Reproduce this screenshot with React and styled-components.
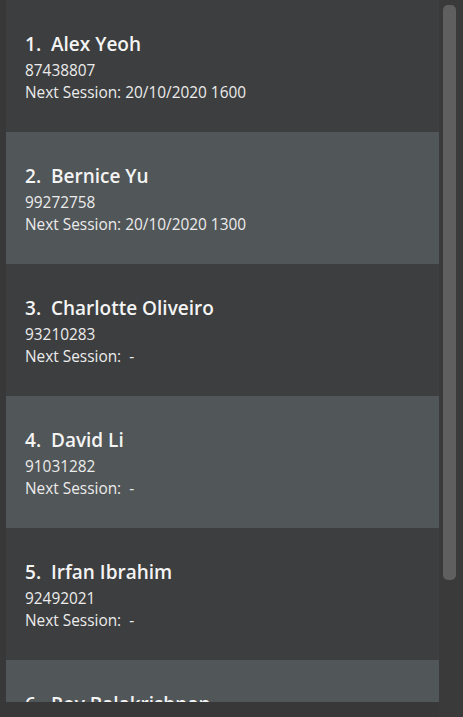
import React from 'react';
import styled, { createGlobalStyle } from 'styled-components';

const people = [
  { name: 'Alex Yeoh', phone: '87438807', session: '20/10/2020 1600' },
  { name: 'Bernice Yu', phone: '99272758', session: '20/10/2020 1300' },
  { name: 'Charlotte Oliveiro', phone: '93210283', session: ' -' },
  { name: 'David Li', phone: '91031282', session: ' -' },
  { name: 'Irfan Ibrahim', phone: '92492021', session: ' -' },
  { name: 'Roy Balakrishnan', phone: '92624417', session: ' -' },
];

const GlobalStyle = createGlobalStyle`
  html, body {
    margin: 0;
    padding: 0;
    background: #383838;
    overflow: hidden;
  }
`;

const App = () => {
  return (
    <>
      <GlobalStyle />
      <Window>
        <ListArea>
          <List>
            {people.map((p, i) => (
              <Cell key={p.name} odd={i % 2 === 1}>
                <Name>
                  {i + 1}.&nbsp;&nbsp;{p.name}
                </Name>
                <Detail>{p.phone}</Detail>
                <Detail>Next Session: {p.session}</Detail>
              </Cell>
            ))}
          </List>
        </ListArea>
        <Track>
          <Thumb />
        </Track>
      </Window>
    </>
  );
};

const Window = styled.div`
  width: 463px;
  height: 717px;
  background: #383838;
  display: flex;
  overflow: hidden;
`;

const ListArea = styled.div`
  width: 433px;
  margin-left: 6px;
  height: 702px;
  overflow: hidden;
`;

const List = styled.div`
  display: flex;
  flex-direction: column;
`;

const Cell = styled.div.withConfig({ shouldForwardProp: (prop) => prop !== 'odd' })`
  height: 132px;
  flex-shrink: 0;
  box-sizing: border-box;
  padding: 30px 19px 0;
  background: ${(p) => (p.odd ? '#515658' : '#3c3e3f')};
  font-family: 'Open Sans', 'Noto Sans', sans-serif;
  color: #ffffff;
`;

const Name = styled.div`
  font-size: 19px;
  font-weight: 600;
  line-height: 28px;
  white-space: pre;
  margin-bottom: 2px;
  color: #f4f4f4;
`;

const Detail = styled.div`
  font-size: 15.4px;
  line-height: 22px;
  white-space: pre;
  color: #ececec;
`;

const Track = styled.div`
  width: 24px;
  height: 717px;
  background: #3a3a3a;
  box-sizing: border-box;
  padding: 5px 7px 0 4px;
`;

const Thumb = styled.div`
  width: 13px;
  height: 575px;
  background: #5f5f5f;
  border-radius: 5px;
`;

export default App;
